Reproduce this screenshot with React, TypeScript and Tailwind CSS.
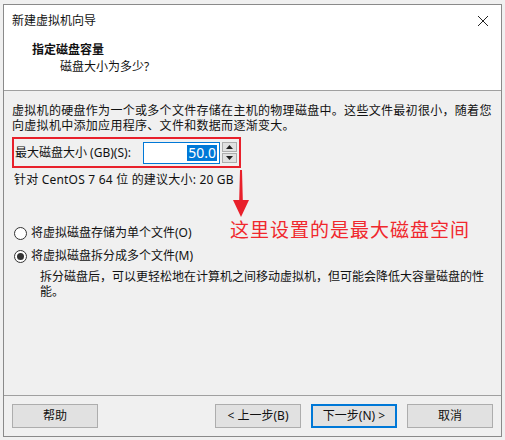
import React from 'react';

const font = { fontFamily: '"Noto Sans", "Noto Sans CJK SC", sans-serif' };

function Radio({ checked }: { checked?: boolean }) {
  return (
    <span className="w-[13px] h-[13px] rounded-full border border-[#333] bg-white flex items-center justify-center shrink-0">
      {checked && <span className="w-[7px] h-[7px] rounded-full bg-[#333]" />}
    </span>
  );
}

function Btn({ label, focus }: { label: string; focus?: boolean }) {
  return (
    <button
      className={
        'w-[86px] h-[24px] text-[12px] leading-none text-[#111] bg-[#e1e1e1] ' +
        (focus ? 'border-2 border-[#0078d7]' : 'border border-[#adadad]')
      }
    >
      {label}
    </button>
  );
}

export default function App() {
  return (
    <div className="w-[505px] h-[440px] bg-[#f0f0f0] pt-[4px] pl-[3px] pr-[3px] pb-[3px]" style={font}>
      <div className="relative h-full border border-[#8a8a8a] bg-[#f0f0f0] flex flex-col text-[#111]">
        {/* title bar */}
        <div className="h-[31px] bg-white flex items-center justify-between pl-[8px] pr-[10px]">
          <span className="text-[12px] leading-none">新建虚拟机向导</span>
          <svg width="12" height="12" viewBox="0 0 12 12" className="mr-[2px]">
            <path d="M1 1 L11 11 M11 1 L1 11" stroke="#222" strokeWidth="1" />
          </svg>
        </div>

        {/* header */}
        <div className="h-[55px] bg-white border-b border-[#a0a0a0] pl-[28px] pt-[5px]">
          <div className="text-[12px] font-bold leading-[17px]">指定磁盘容量</div>
          <div className="text-[12px] leading-[17px] pl-[28px]">磁盘大小为多少?</div>
        </div>

        {/* body */}
        <div className="flex-1 px-[8px] pt-[12px]">
          <p className="text-[12px] leading-[15px] tracking-[0.3px]">
            虚拟机的硬盘作为一个或多个文件存储在主机的物理磁盘中。这些文件最初很小，随着您
            <br />
            向虚拟机中添加应用程序、文件和数据而逐渐变大。
          </p>

          <div className="mt-[4px] w-[229px] h-[31px] border-2 border-[#e8202b] flex items-center pl-[1px]">
            <span className="text-[12px] leading-none w-[128px] shrink-0 whitespace-nowrap">最大磁盘大小 (GB)(S):</span>
            <div className="w-[77px] h-[22px] border border-[#0078d7] bg-white flex items-center justify-end pr-[2px]">
              <span className="bg-[#0078d7] text-white text-[14px] leading-[16px] px-[1px]">50.0</span>
            </div>
            <div className="ml-[2px] flex flex-col gap-[1px]">
              <div className="w-[15px] h-[10px] border border-[#adadad] bg-[#e1e1e1] flex items-center justify-center">
                <svg width="7" height="4" viewBox="0 0 7 4"><path d="M0 4 L3.5 0 L7 4 Z" fill="#222" /></svg>
              </div>
              <div className="w-[15px] h-[10px] border border-[#adadad] bg-[#e1e1e1] flex items-center justify-center">
                <svg width="7" height="4" viewBox="0 0 7 4"><path d="M0 0 L3.5 4 L7 0 Z" fill="#222" /></svg>
              </div>
            </div>
          </div>

          <div className="mt-[4px] pl-[2px] text-[12px] leading-[16px] tracking-[0.2px]">针对 CentOS 7 64 位 的建议大小: 20 GB</div>

          <div className="mt-[38px] pl-[2px] flex flex-col gap-[9px]">
            <label className="flex items-center gap-[4px] text-[12px] leading-[14px]">
              <Radio />
              将虚拟磁盘存储为单个文件(O)
            </label>
            <label className="flex items-center gap-[4px] text-[12px] leading-[14px]">
              <Radio checked />
              将虚拟磁盘拆分成多个文件(M)
            </label>
          </div>
          <p className="mt-[6px] pl-[28px] text-[12px] leading-[15px]">
            拆分磁盘后，可以更轻松地在计算机之间移动虚拟机，但可能会降低大容量磁盘的性
            <br />
            能。
          </p>
        </div>

        {/* footer */}
        <div className="h-[41px] border-t border-[#a0a0a0] flex items-center px-[8px]">
          <Btn label="帮助" />
          <div className="flex-1" />
          <div className="flex gap-[10px]">
            <Btn label="< 上一步(B)" />
            <Btn label="下一步(N) >" focus />
            <Btn label="取消" />
          </div>
        </div>

        {/* annotation overlay */}
        <svg className="absolute left-[228px] top-[165px]" width="18" height="48" viewBox="0 0 18 48">
          <path d="M8 0 L10 0 L10.8 30 L17 30 L9 47 L1 30 L7.2 30 Z" fill="#e8202b" />
        </svg>
        <div className="absolute left-[226px] top-[213px] text-[19px] leading-[24px] tracking-[1px] text-[#f0282d]">
          这里设置的是最大磁盘空间
        </div>
      </div>
    </div>
  );
}
